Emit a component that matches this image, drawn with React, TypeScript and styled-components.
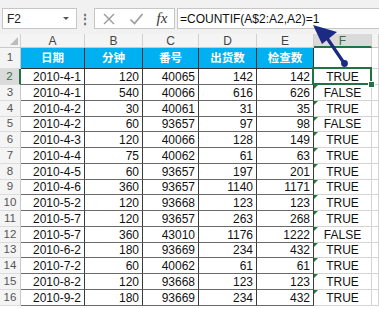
import React from "react";
import styled, { createGlobalStyle, css } from "styled-components";

const GlobalStyle = createGlobalStyle`
  body {
    margin: 0;
    background: #ffffff;
    font-family: "Liberation Sans", Arial, sans-serif;
  }
`;

const GREEN = "#217346";

const Frame = styled.div`
  position: relative;
  width: 379px;
  height: 309px;
  overflow: hidden;
  background: #ffffff;
`;

const Toolbar = styled.div`
  display: flex;
  align-items: stretch;
  height: 21px;
  padding: 8px 0 5px 2px;
  background: #f1f1f1;
`;

const NameBox = styled.div`
  display: flex;
  align-items: center;
  justify-content: space-between;
  width: 75px;
  box-sizing: border-box;
  padding: 0 7px 0 4px;
  background: #fff;
  border: 1px solid #c6c6c6;
  font-size: 12px;
  color: #222;
`;

const Caret = styled.span`
  width: 0;
  height: 0;
  border-left: 3px solid transparent;
  border-right: 3px solid transparent;
  border-top: 3px solid #555;
`;

const Dots = styled.div`
  width: 16px;
  display: flex;
  align-items: center;
  justify-content: center;
  color: #666;
  font-size: 12px;
  font-weight: bold;
`;

const FxBox = styled.div`
  display: flex;
  align-items: center;
  justify-content: space-around;
  width: 81px;
  box-sizing: border-box;
  margin: 0 2px 0 1px;
  background: #fff;
  border: 1px solid #c6c6c6;
`;

const Fx = styled.span`
  font-family: "Liberation Serif", "Times New Roman", serif;
  font-style: italic;
  font-size: 15px;
  color: #333;
`;

const FormulaInput = styled.div`
  flex: 1;
  display: flex;
  align-items: center;
  padding-left: 2px;
  background: #fff;
  border: 1px solid #c6c6c6;
  border-right: none;
  font-size: 12px;
  color: #111;
`;

const Sheet = styled.div`
  display: grid;
  grid-template-columns: 21px 64px 58px 56px 58px 57px 58px 1fr;
`;

type Kind = "corner" | "colhead" | "rowhead" | "title" | "data" | "blank";

const Cell = styled.div<{
  $kind: Kind;
  $h: number;
  $align?: "left" | "right" | "center";
  $active?: boolean;
  $flag?: boolean;
  $selected?: boolean;
}>`
  position: relative;
  box-sizing: border-box;
  height: ${(p) => p.$h}px;
  display: flex;
  align-items: center;
  justify-content: ${(p) =>
    p.$align === "right" ? "flex-end" : p.$align === "left" ? "flex-start" : "center"};
  padding: 0 3px;
  font-size: 12px;
  line-height: 1;
  white-space: nowrap;
  color: #111;

  ${(p) =>
    (p.$kind === "colhead" || p.$kind === "corner") &&
    css`
      background: ${p.$active ? "#dadada" : "#f4f4f4"};
      border-right: 1px solid #d0d0d0;
      border-bottom: ${p.$active ? `2px solid ${GREEN}` : "1px solid #c8c8c8"};
      color: ${p.$active ? "#3c6e4d" : "#444"};
      font-size: 12px;
      padding-top: 1px;
    `}

  ${(p) =>
    p.$kind === "rowhead" &&
    css`
      background: ${p.$active ? "#dadada" : "#f4f4f4"};
      border-right: ${p.$active ? `2px solid ${GREEN}` : "1px solid #c8c8c8"};
      border-bottom: 1px solid #dcdcdc;
      color: ${p.$active ? "#3c6e4d" : "#555"};
      font-size: 11.5px;
    `}

  ${(p) =>
    p.$kind === "title" &&
    css`
      background: #00b0f0;
      color: #fff;
      font-weight: bold;
      font-size: 11.5px;
      font-family: "Noto Sans CJK SC", "Liberation Sans", sans-serif;
      border-right: 1px solid #333;
      border-bottom: 1px solid #333;
    `}

  ${(p) =>
    p.$kind === "data" &&
    css`
      border-right: 1px solid #3a3a3a;
      border-bottom: 1px solid #6a6a6a;
    `}

  ${(p) =>
    p.$kind === "blank" &&
    css`
      border-right: 1px solid #d4d4d4;
      border-bottom: 1px solid #d4d4d4;
    `}

  ${(p) =>
    p.$flag &&
    css`
      &::before {
        content: "";
        position: absolute;
        left: 0;
        top: 0;
        border-top: 4px solid #1e7b34;
        border-right: 4px solid transparent;
      }
    `}

  ${(p) =>
    p.$selected &&
    css`
      &::after {
        content: "";
        position: absolute;
        inset: -2px -1px -1px -2px;
        border: 2px solid ${GREEN};
        pointer-events: none;
      }
    `}
`;

const FillHandle = styled.span`
  position: absolute;
  right: -4px;
  bottom: -4px;
  width: 5px;
  height: 5px;
  background: ${GREEN};
  border: 1px solid #fff;
  z-index: 2;
`;

const CornerMark = styled.span`
  position: absolute;
  right: 2px;
  bottom: 2px;
  border-bottom: 8px solid #bdbdbd;
  border-left: 8px solid transparent;
`;

const Overlay = styled.svg`
  position: absolute;
  left: 0;
  top: 0;
  pointer-events: none;
`;

const columns = ["A", "B", "C", "D", "E", "F", ""];
const titles = ["日期", "分钟", "番号", "出货数", "检查数"];

const rows: [string, number, number, number, number, string][] = [
  ["2010-4-1", 120, 40065, 142, 142, "TRUE"],
  ["2010-4-1", 540, 40066, 616, 626, "FALSE"],
  ["2010-4-2", 30, 40061, 31, 35, "TRUE"],
  ["2010-4-2", 60, 93657, 97, 98, "FALSE"],
  ["2010-4-3", 120, 40066, 128, 149, "TRUE"],
  ["2010-4-4", 75, 40062, 61, 63, "TRUE"],
  ["2010-4-5", 60, 93657, 197, 201, "TRUE"],
  ["2010-4-6", 360, 93657, 1140, 1171, "TRUE"],
  ["2010-5-2", 120, 93668, 123, 123, "TRUE"],
  ["2010-5-7", 120, 93657, 263, 268, "TRUE"],
  ["2010-5-7", 360, 43010, 1176, 1222, "FALSE"],
  ["2010-6-2", 180, 93669, 234, 432, "TRUE"],
  ["2010-7-2", 60, 40062, 61, 61, "TRUE"],
  ["2010-8-2", 120, 93668, 123, 123, "TRUE"],
  ["2010-9-2", 180, 93669, 234, 432, "TRUE"],
];

function XIcon() {
  return (
    <svg width="14" height="14" viewBox="0 0 14 14">
      <path d="M2 2 L12 12 M12 2 L2 12" stroke="#9a9a9a" strokeWidth="1.4" />
    </svg>
  );
}

function CheckIcon() {
  return (
    <svg width="15" height="14" viewBox="0 0 15 14">
      <path d="M1.5 7.5 L5.5 11.5 L13.5 2" stroke="#9a9a9a" strokeWidth="1.6" fill="none" />
    </svg>
  );
}

export default function App() {
  return (
    <Frame>
      <GlobalStyle />
      <Toolbar>
        <NameBox>
          F2
          <Caret />
        </NameBox>
        <Dots>⋮</Dots>
        <FxBox>
          <XIcon />
          <CheckIcon />
          <Fx>fx</Fx>
        </FxBox>
        <FormulaInput>=COUNTIF(A$2:A2,A2)=1</FormulaInput>
      </Toolbar>

      <Sheet>
        <Cell $kind="corner" $h={14}>
          <CornerMark />
        </Cell>
        {columns.map((c, i) => (
          <Cell key={i} $kind="colhead" $h={14} $active={c === "F"}>
            {c}
          </Cell>
        ))}

        <Cell $kind="rowhead" $h={21}>
          1
        </Cell>
        {titles.map((t) => (
          <Cell key={t} $kind="title" $h={21}>
            {t}
          </Cell>
        ))}
        <Cell $kind="blank" $h={21} />
        <Cell $kind="blank" $h={21} />

        {rows.map((r, i) => {
          const h = i % 4 === 3 ? 15 : 16;
          const n = i + 2;
          return (
            <React.Fragment key={n}>
              <Cell $kind="rowhead" $h={h} $active={n === 2}>
                {n}
              </Cell>
              <Cell $kind="data" $h={h} $align="right">
                {r[0]}
              </Cell>
              <Cell $kind="data" $h={h} $align="right">
                {r[1]}
              </Cell>
              <Cell $kind="data" $h={h} $align="right">
                {r[2]}
              </Cell>
              <Cell $kind="data" $h={h} $align="right">
                {r[3]}
              </Cell>
              <Cell $kind="data" $h={h} $align="right">
                {r[4]}
              </Cell>
              <Cell $kind="blank" $h={h} $flag={n > 2} $selected={n === 2}>
                {r[5]}
                {n === 2 && <FillHandle />}
              </Cell>
              <Cell $kind="blank" $h={h} />
            </React.Fragment>
          );
        })}
      </Sheet>

      <Overlay width="379" height="309" viewBox="0 0 379 309">
        <line x1="344" y1="63" x2="327" y2="38" stroke="#1b2a82" strokeWidth="3.2" strokeLinecap="round" />
        <polygon points="313,25 337,32 322,44" fill="#1b2a82" />
        <circle cx="344.5" cy="63.5" r="3.4" fill="#1b2a82" />
      </Overlay>
    </Frame>
  );
}
